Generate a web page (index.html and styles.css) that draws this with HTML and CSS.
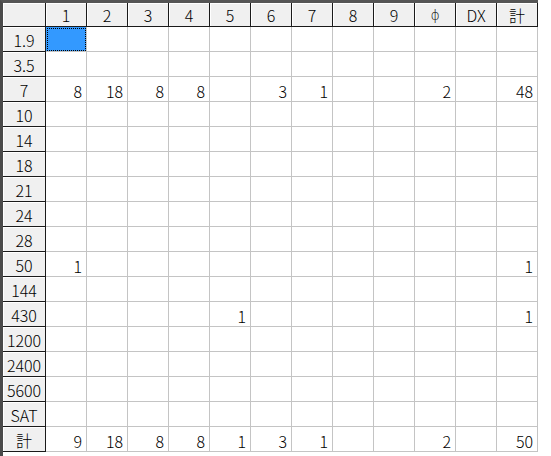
FILE: index.html
```html
<!DOCTYPE html>
<html lang="ja">
<head>
<meta charset="utf-8">
<title>集計</title>
<link rel="stylesheet" href="styles.css">
</head>
<body>
<div class="sheet">
  <div class="grid">
    <div class="hdr corner"></div>
    <div class="hdr">1</div><div class="hdr">2</div><div class="hdr">3</div><div class="hdr">4</div><div class="hdr">5</div><div class="hdr">6</div><div class="hdr">7</div><div class="hdr">8</div><div class="hdr">9</div><div class="hdr phi">ϕ</div><div class="hdr">DX</div><div class="hdr">計</div>

    <div class="rh">1.9</div><div class="c sel"></div><div class="c"></div><div class="c"></div><div class="c"></div><div class="c"></div><div class="c"></div><div class="c"></div><div class="c"></div><div class="c"></div><div class="c"></div><div class="c"></div><div class="c"></div>
    <div class="rh">3.5</div><div class="c"></div><div class="c"></div><div class="c"></div><div class="c"></div><div class="c"></div><div class="c"></div><div class="c"></div><div class="c"></div><div class="c"></div><div class="c"></div><div class="c"></div><div class="c"></div>
    <div class="rh">7</div><div class="c">8</div><div class="c">18</div><div class="c">8</div><div class="c">8</div><div class="c"></div><div class="c">3</div><div class="c">1</div><div class="c"></div><div class="c"></div><div class="c">2</div><div class="c"></div><div class="c">48</div>
    <div class="rh">10</div><div class="c"></div><div class="c"></div><div class="c"></div><div class="c"></div><div class="c"></div><div class="c"></div><div class="c"></div><div class="c"></div><div class="c"></div><div class="c"></div><div class="c"></div><div class="c"></div>
    <div class="rh">14</div><div class="c"></div><div class="c"></div><div class="c"></div><div class="c"></div><div class="c"></div><div class="c"></div><div class="c"></div><div class="c"></div><div class="c"></div><div class="c"></div><div class="c"></div><div class="c"></div>
    <div class="rh">18</div><div class="c"></div><div class="c"></div><div class="c"></div><div class="c"></div><div class="c"></div><div class="c"></div><div class="c"></div><div class="c"></div><div class="c"></div><div class="c"></div><div class="c"></div><div class="c"></div>
    <div class="rh">21</div><div class="c"></div><div class="c"></div><div class="c"></div><div class="c"></div><div class="c"></div><div class="c"></div><div class="c"></div><div class="c"></div><div class="c"></div><div class="c"></div><div class="c"></div><div class="c"></div>
    <div class="rh">24</div><div class="c"></div><div class="c"></div><div class="c"></div><div class="c"></div><div class="c"></div><div class="c"></div><div class="c"></div><div class="c"></div><div class="c"></div><div class="c"></div><div class="c"></div><div class="c"></div>
    <div class="rh">28</div><div class="c"></div><div class="c"></div><div class="c"></div><div class="c"></div><div class="c"></div><div class="c"></div><div class="c"></div><div class="c"></div><div class="c"></div><div class="c"></div><div class="c"></div><div class="c"></div>
    <div class="rh">50</div><div class="c">1</div><div class="c"></div><div class="c"></div><div class="c"></div><div class="c"></div><div class="c"></div><div class="c"></div><div class="c"></div><div class="c"></div><div class="c"></div><div class="c"></div><div class="c">1</div>
    <div class="rh">144</div><div class="c"></div><div class="c"></div><div class="c"></div><div class="c"></div><div class="c"></div><div class="c"></div><div class="c"></div><div class="c"></div><div class="c"></div><div class="c"></div><div class="c"></div><div class="c"></div>
    <div class="rh">430</div><div class="c"></div><div class="c"></div><div class="c"></div><div class="c"></div><div class="c">1</div><div class="c"></div><div class="c"></div><div class="c"></div><div class="c"></div><div class="c"></div><div class="c"></div><div class="c">1</div>
    <div class="rh">1200</div><div class="c"></div><div class="c"></div><div class="c"></div><div class="c"></div><div class="c"></div><div class="c"></div><div class="c"></div><div class="c"></div><div class="c"></div><div class="c"></div><div class="c"></div><div class="c"></div>
    <div class="rh">2400</div><div class="c"></div><div class="c"></div><div class="c"></div><div class="c"></div><div class="c"></div><div class="c"></div><div class="c"></div><div class="c"></div><div class="c"></div><div class="c"></div><div class="c"></div><div class="c"></div>
    <div class="rh">5600</div><div class="c"></div><div class="c"></div><div class="c"></div><div class="c"></div><div class="c"></div><div class="c"></div><div class="c"></div><div class="c"></div><div class="c"></div><div class="c"></div><div class="c"></div><div class="c"></div>
    <div class="rh">SAT</div><div class="c"></div><div class="c"></div><div class="c"></div><div class="c"></div><div class="c"></div><div class="c"></div><div class="c"></div><div class="c"></div><div class="c"></div><div class="c"></div><div class="c"></div><div class="c"></div>
    <div class="rh">計</div><div class="c">9</div><div class="c">18</div><div class="c">8</div><div class="c">8</div><div class="c">1</div><div class="c">3</div><div class="c">1</div><div class="c"></div><div class="c"></div><div class="c">2</div><div class="c"></div><div class="c">50</div>
  </div>
</div>
</body>
</html>
```

FILE: styles.css
```css
html, body {
  margin: 0;
  padding: 0;
  background: #ffffff;
}

body {
  font-family: "Noto Sans CJK JP", "Liberation Sans", sans-serif;
  font-size: 16px;
  font-weight: 300;
  color: #000000;
}

.sheet {
  box-sizing: border-box;
  height: 456px;
  width: 538px;
  border-left: 3px solid #4a4a4a;
  border-top: 3px solid #555555;
}

.grid {
  display: grid;
  grid-template-columns: 43px repeat(12, 41px);
  grid-template-rows: 24px;
  grid-auto-rows: 25px;
}

.hdr,
.rh {
  box-sizing: border-box;
  background: #f0f0f0;
  border-right: 1px solid #1a1a1a;
  border-bottom: 1px solid #1a1a1a;
  box-shadow: inset 1px 1px 0 #ffffff;
  display: flex;
  align-items: center;
  justify-content: center;
  line-height: 1;
  padding-top: 1px;
}

.phi {
  font-family: "DejaVu Sans", sans-serif;
  font-size: 14px;
}

.c {
  box-sizing: border-box;
  border-right: 1px solid #c4c4c4;
  border-bottom: 1px solid #c4c4c4;
  display: flex;
  align-items: center;
  justify-content: flex-end;
  padding-right: 4px;
  padding-top: 3px;
  line-height: 1;
}

.sel {
  background: #3399ff;
  outline: 1px dotted #000000;
  outline-offset: -2px;
}
```
